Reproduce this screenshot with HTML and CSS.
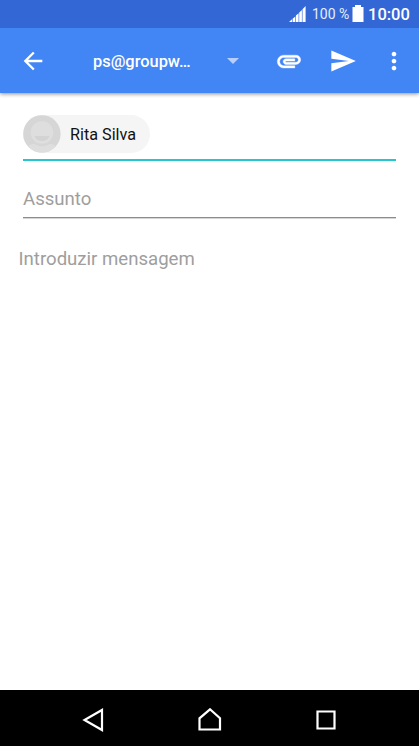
FILE: index.html
```html
<!DOCTYPE html>
<html lang="pt">
<head>
<meta charset="utf-8">
<meta name="viewport" content="width=device-width, initial-scale=1">
<title>Compor mensagem</title>
<link rel="stylesheet" href="styles.css">
</head>
<body>
<div class="screen">
  <header class="status">
    <svg class="signal" viewBox="0 0 17 16" width="17" height="16"><path d="M0 16l3-2.8V16zM3.600 12.700l2.700-2.300V16H3.600zM6.900 9.600l2.700-2.400V16H6.900zM10.200 6.500l2.700-2.400V16h-2.700zM13.500 3.200L16.600 0v16h-3.100z"/></svg>
    <span class="percent">100 %</span>
    <svg class="battery" viewBox="0 0 12 17" width="12" height="17"><path d="M3 0h6v2h2.500v15H.5V2H3z"/></svg>
    <span class="clock">10:00</span>
  </header>
  <div class="appbar">
    <svg class="icon back" viewBox="0 0 24 24"><path d="M20 11H7.830l5.590-5.590L12 4l-8 8 8 8 1.410-1.410L7.830 13H20z"/></svg>
    <span class="account">ps@groupw…</span>
    <svg class="caret" viewBox="0 0 12 6" width="12" height="6"><path d="M0 0h12L6 6z"/></svg>
    <svg class="icon attach" viewBox="0 0 24 24"><path d="M2 12.5C2 9.46 4.46 7 7.5 7H18c2.21 0 4 1.79 4 4s-1.79 4-4 4H9.5C8.12 15 7 13.88 7 12.5S8.12 10 9.5 10H17v2H9.41c-.55 0-.55 1 0 1H18c1.1 0 2-.9 2-2s-.9-2-2-2H7.5C5.57 9 4 10.57 4 12.5S5.57 16 7.5 16H17v2H7.5C4.46 18 2 15.54 2 12.5z"/></svg>
    <svg class="icon send" viewBox="0 0 24 24"><path d="M2.01 21L23 12 2.01 3 2 10l15 2-15 2z"/></svg>
    <svg class="icon more" viewBox="0 0 24 24"><path d="M12 8c1.1 0 2-.9 2-2s-.9-2-2-2-2 .9-2 2 .9 2 2 2zm0 2c-1.1 0-2 .9-2 2s.9 2 2 2 2-.9 2-2-.9-2-2-2zm0 6c-1.1 0-2 .9-2 2s.9 2 2 2 2-.9 2-2-.9-2-2-2z"/></svg>
  </div>
  <main class="compose">
    <div class="recipients">
      <div class="chip">
        <svg class="avatar" viewBox="0 0 38 38" width="38" height="38">
          <defs><clipPath id="round"><circle cx="18.900" cy="18.900" r="18.700"/></clipPath></defs>
          <g clip-path="url(#round)">
            <path class="avatar-bg" d="M0 0h38v38H0z"/>
            <path class="avatar-body" d="M4 34q1-5 7-5h16q6 0 7 5v4H4z"/>
            <circle class="avatar-ring" cx="19" cy="18.500" r="12.800"/>
            <circle class="avatar-face" cx="19" cy="17.500" r="11.300"/>
            <path class="avatar-smile" d="M11.500 21h15q-1.500 5-7.500 5t-7.500-5z"/>
          </g>
        </svg>
        <span class="name">Rita Silva</span>
      </div>
    </div>
    <div class="subject">Assunto</div>
    <div class="message">Introduzir mensagem</div>
  </main>
  <nav class="navbar">
    <svg viewBox="0 0 24 24" width="24" height="24"><path d="M21 2v20L3.500 12z"/></svg>
    <svg viewBox="0 0 24 24" width="24" height="24"><path d="M1.500 21.500V10.300L12 1.300l10 9v11.200z"/></svg>
    <svg viewBox="0 0 24 24" width="24" height="24"><path d="M3.500 3.500h17v17h-17z"/></svg>
  </nav>
</div>
</body>
</html>
```
FILE: styles.css
```css
* { box-sizing: border-box; }
body {
  margin: 0;
  background: #fff;
  font-family: Roboto, "Liberation Sans", sans-serif;
}
svg { display: block; flex: none; }
.screen {
  display: flex;
  flex-direction: column;
  height: 746px;
  overflow: hidden;
}
.status {
  position: relative;
  z-index: 1;
  display: flex;
  align-items: center;
  height: 28px;
  flex: none;
  padding-left: 289px;
  background: #3367d6;
  color: #fff;
  fill: #fff;
  white-space: nowrap;
}
.percent { width: 40px; margin-left: 6px; font-size: 14px; line-height: 28px; color: #e6edfb; }
.battery { margin-bottom: 1px; }
.clock { margin-left: 4px; font-size: 16.500px; font-weight: 500; line-height: 28px; padding-top: 1px; }
.appbar {
  display: grid;
  grid-template-columns: 93px 134px 47.500px 54.500px 50.500px 39.500px;
  align-items: center;
  height: 65px;
  flex: none;
  background: #4285f4;
  color: #fff;
  fill: #fff;
  box-shadow: 0 1px 4px rgba(0, 0, 0, .45);
}
.icon { width: 28px; height: 28px; }
.back { margin-left: 18.500px; }
.attach { stroke: #fff; stroke-width: .3; }
.account { font-size: 16.400px; font-weight: 500; line-height: 24px; padding-top: 2px; }
.caret { margin-top: 1px; fill: #b7d0fb; }
.compose { flex: 1; padding: 22px 23px 0; }
.recipients { height: 46px; border-bottom: 2px solid #26c6cf; }
.chip {
  display: flex;
  align-items: center;
  width: 127px;
  height: 38px;
  border-radius: 19px;
  background: #f5f5f5;
}
.avatar-bg { fill: #d6d6d6; }
.avatar-body { fill: #dedede; }
.avatar-ring { fill: #d6d6d6; }
.avatar-face { fill: #dedede; }
.avatar-smile { fill: #d3d3d3; }
.name { margin-left: 9px; font-size: 16.200px; color: #111; white-space: nowrap; }
.subject {
  height: 57px;
  padding-top: 26px;
  border-bottom: 1px solid #8c8c8c;
  box-shadow: 0 1px #d5d5d5;
  font-size: 18.600px;
  line-height: 24px;
  color: #9e9e9e;
}
.message {
  margin: 29px 0 0 -4.500px;
  font-size: 18.600px;
  line-height: 24px;
  color: #9e9e9e;
}
.navbar {
  display: flex;
  gap: 92.500px;
  height: 56px;
  flex: none;
  padding: 18px 0 0 81px;
  background: #000;
  fill: none;
  stroke: #fff;
  stroke-width: 2.200;
}
```
